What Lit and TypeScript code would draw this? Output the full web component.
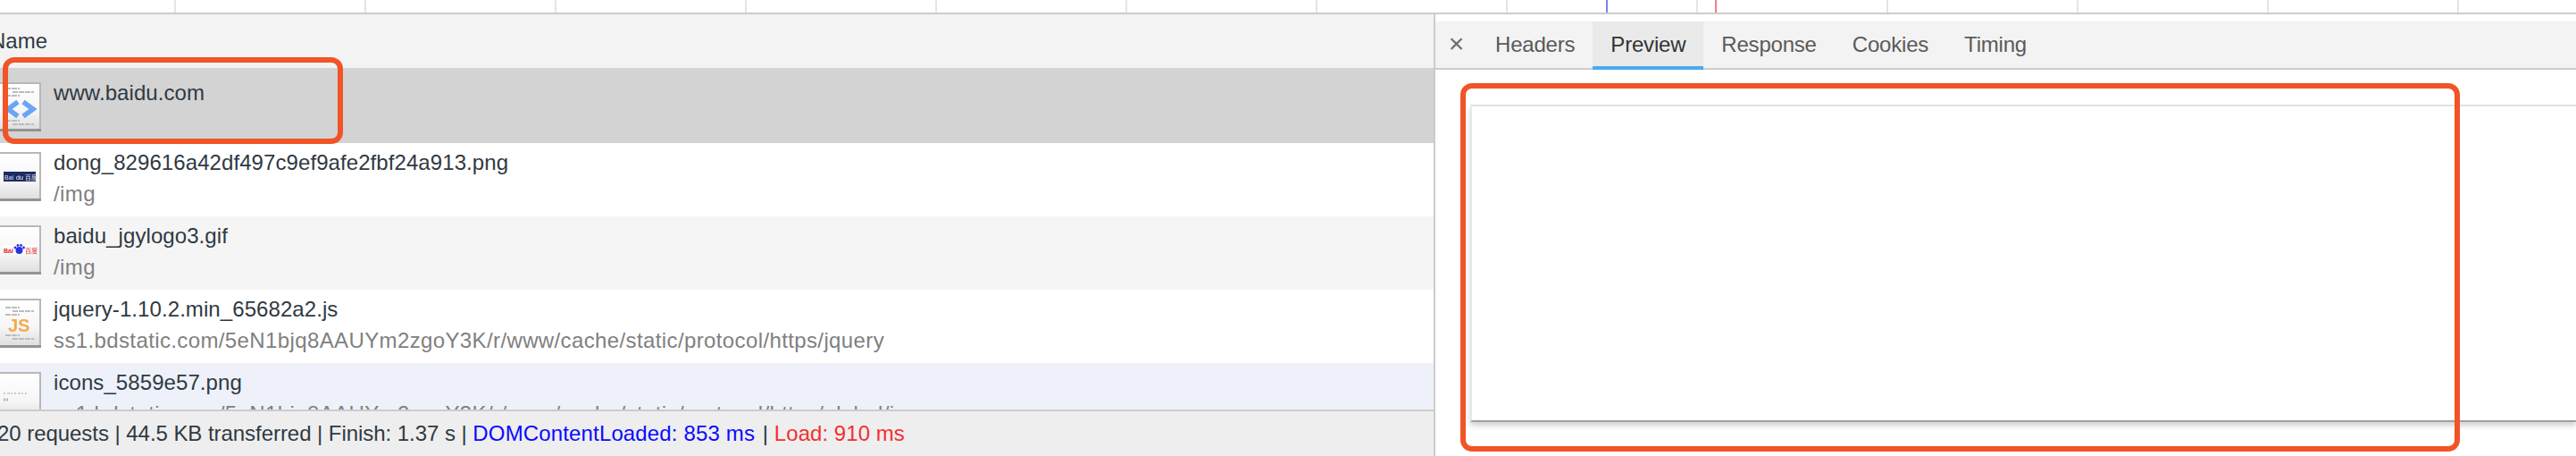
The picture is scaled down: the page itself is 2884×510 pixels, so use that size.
import { LitElement, css, html, svg } from 'lit'
import { customElement } from 'lit/decorators.js'

type RowKind = 'html' | 'dong' | 'logo' | 'js' | 'sprite'

interface RequestRow {
  name: string
  path: string
  kind: RowKind
  tone: string
}

const ROWS: RequestRow[] = [
  { name: 'www.baidu.com', path: '', kind: 'html', tone: 'selected' },
  { name: 'dong_829616a42df497c9ef9afe2fbf24a913.png', path: '/img', kind: 'dong', tone: 'white' },
  { name: 'baidu_jgylogo3.gif', path: '/img', kind: 'logo', tone: 'grey' },
  { name: 'jquery-1.10.2.min_65682a2.js', path: 'ss1.bdstatic.com/5eN1bjq8AAUYm2zgoY3K/r/www/cache/static/protocol/https/jquery', kind: 'js', tone: 'white' },
  { name: 'icons_5859e57.png', path: 'ss1.bdstatic.com/5eN1bjq8AAUYm2zgoY3K/r/www/cache/static/protocol/https/global/img', kind: 'sprite', tone: 'hover' },
]

const TABS = ['Headers', 'Preview', 'Response', 'Cookies', 'Timing']

// greyed "source code" lines on the document thumbnails
const textLines = (ys: number[]) =>
  ys.map((y, i) => svg`<path d="M${i % 2 ? 16 : 8} ${y}h${i % 2 ? 24 : 16}" stroke="#bdbdbd" stroke-width="2" stroke-dasharray="6 1"/>`)

function iconBody(kind: RowKind) {
  if (kind === 'html') {
    return svg`${textLines([7, 11, 15])}
      <path d="M22 22l-11 8 11 8M28 22l11 8-11 8" fill="none" stroke="#6aa4f5" stroke-width="5.500"/>
      ${textLines([43, 47])}`
  }
  if (kind === 'dong') {
    return svg`<rect x="6" y="22" width="36" height="11" fill="#1f2a62"/>
      <text x="7" y="31" class="mini" fill="#dfe3f2">Bai</text>
      <text x="20" y="31" class="mini" fill="#fff">du</text>
      <text x="30" y="31" class="mini" fill="#dfe3f2">百度</text>`
  }
  if (kind === 'logo') {
    return svg`<rect x="6" y="22" width="36" height="10" fill="#fff"/>
      <text x="6" y="31" class="mini bold" fill="#dd2222">Bai</text>
      <text x="30" y="31" class="mini" fill="#dd2222">百度</text>
      <circle cx="23.500" cy="28" r="4" fill="#2932e1"/>
      <circle cx="19" cy="25" r="1.400" fill="#2932e1"/><circle cx="22" cy="22.500" r="1.400" fill="#2932e1"/>
      <circle cx="25.500" cy="22.500" r="1.400" fill="#2932e1"/><circle cx="28.500" cy="25" r="1.400" fill="#2932e1"/>`
  }
  if (kind === 'js') {
    return svg`${textLines([10, 14, 18])}
      <text x="11" y="37" class="js" fill="#f5a94a">JS</text>
      ${textLines([41, 45])}`
  }
  return svg`<path d="M6 24h28" stroke="#d79ca4" stroke-width="1" stroke-dasharray="2 2"/>
    <path d="M6 24h28" stroke="#8fb0dc" stroke-width="1" stroke-dasharray="1 5"/>
    <path d="M6 31h6" stroke="#b5b5b5" stroke-width="3" stroke-dasharray="2 1"/>`
}

@customElement('file-icon')
export class FileIcon extends LitElement {
  static properties = { kind: { type: String } }
  kind: RowKind = 'html'

  render() {
    return html`<svg width="48" height="56" viewBox="0 0 48 56">
      <defs>
        <linearGradient id="sheet" x1="0" y1="0" x2="0" y2="1">
          <stop offset="0" stop-color="#fff" />
          <stop offset="0.6" stop-color="#f6f6f6" />
          <stop offset="1" stop-color="#dedede" />
        </linearGradient>
      </defs>
      <rect x="1" y="1" width="46" height="52" fill="url(#sheet)" stroke="#b8b8b8" stroke-width="2" />
      <rect x="0" y="52" width="48" height="3" fill="#949494" />
      ${iconBody(this.kind)}
    </svg>`
  }

  static styles = css`
    :host {
      display: block;
      width: 48px;
      height: 56px;
    }
    svg {
      display: block;
      filter: blur(0.5px);
    }
    .mini {
      font-family: 'Liberation Sans', 'Noto Sans CJK SC', sans-serif;
      font-size: 7px;
    }
    .bold {
      font-weight: bold;
    }
    .js {
      font-family: 'Liberation Sans', sans-serif;
      font-size: 20px;
      font-weight: bold;
    }
  `
}

@customElement('app-root')
export class AppRoot extends LitElement {
  render() {
    return html`
      <div class="timeline">
        ${Array.from({ length: 14 }, () => html`<div class="tick"></div>`)}
        <div class="marker dom"></div>
        <div class="marker load"></div>
      </div>
      <div class="main">
        <section class="list">
          <div class="name-head"><span>Name</span></div>
          <div class="rows">
            ${ROWS.map(
              (r) => html`
                <div class="row ${r.tone}">
                  <file-icon .kind=${r.kind}></file-icon>
                  <div class="labels">
                    <div class="name">${r.name}</div>
                    <div class="path">${r.path}</div>
                  </div>
                </div>
              `
            )}
          </div>
          <div class="summary">
            <span class="counts">20 requests | 44.5 KB transferred | Finish: 1.37 s | </span><span class="blue">DOMContentLoaded: 853 ms</span><span class="sep"> | </span><span class="red">Load: 910 ms</span>
          </div>
        </section>
        <section class="detail">
          <div class="tabs">
            <div class="close">×</div>
            ${TABS.map((t) => html`<div class="tab ${t === 'Preview' ? 'active' : ''}">${t}</div>`)}
          </div>
          <div class="preview-area"><div class="page"></div></div>
        </section>
      </div>
      <div class="callout left"></div>
      <div class="callout right"></div>
    `
  }

  static styles = css`
    :host {
      display: block;
      position: relative;
      width: 2884px;
      height: 510px;
      overflow: hidden;
      background: #fff;
      font-family: 'Liberation Sans', Arial, sans-serif;
      font-size: 24px;
      color: #303942;
    }
    .timeline {
      display: flex;
      position: relative;
      height: 14px;
      border-bottom: 2px solid #ccc;
    }
    .tick {
      flex: 0 0 213px;
      box-sizing: border-box;
      border-right: 2px solid #e5e5e5;
    }
    .tick:first-child {
      flex-basis: 197px;
    }
    .marker {
      position: absolute;
      top: 0;
      width: 2px;
      height: 14px;
    }
    .dom {
      left: 1798px;
      background: #7b83f0;
    }
    .load {
      left: 1920px;
      background: #f08080;
    }
    .main {
      display: flex;
      height: 494px;
    }
    .list {
      display: flex;
      flex-direction: column;
      flex: 0 0 1605px;
      min-width: 0;
      border-right: 2px solid #ccc;
    }
    .name-head {
      flex: 0 0 60px;
      display: flex;
      align-items: center;
      background: #f3f3f3;
    }
    .name-head span {
      margin-left: -11px;
    }
    .rows {
      flex: 1;
      min-height: 0;
      overflow: hidden;
    }
    .row {
      display: flex;
      box-sizing: border-box;
      height: 82px;
      padding-top: 10px;
    }
    .row.selected {
      height: 84px;
      padding-top: 16px;
      background: #d3d3d3;
    }
    .row.white {
      background: #fff;
    }
    .row.grey {
      background: #f5f5f5;
    }
    .row.hover {
      background: #eef1f9;
    }
    file-icon {
      margin-left: -2px;
      flex: none;
    }
    .labels {
      margin-left: 14px;
      margin-top: -5px;
      line-height: 34px;
      white-space: nowrap;
    }
    .name {
      color: #303942;
      letter-spacing: 0.08px;
    }
    .path {
      color: #808080;
      line-height: 36px;
      min-height: 36px;
      letter-spacing: 0.38px;
    }
    .summary {
      flex: 0 0 50px;
      display: flex;
      align-items: center;
      white-space: pre;
      border-top: 2px solid #ccc;
      background: #eee;
      letter-spacing: 0.05px;
    }
    .counts {
      margin-left: -3px;
      letter-spacing: -0.05px;
    }
    .blue {
      color: #0a0aff;
      letter-spacing: 0.15px;
    }
    .sep {
      margin-left: 2px;
    }
    .red {
      color: #f23030;
    }
    .detail {
      flex: 1;
      min-width: 0;
      display: flex;
      flex-direction: column;
    }
    .tabs {
      display: flex;
      box-sizing: border-box;
      height: 54px;
      margin-top: 8px;
      background: #f3f3f3;
      border-bottom: 2px solid #ccc;
      color: #5a5a5a;
      letter-spacing: -0.2px;
    }
    .close {
      flex: 0 0 47px;
      text-align: center;
      line-height: 50px;
      font-size: 30px;
      color: #6e6e6e;
    }
    .tab {
      padding: 0 20px;
      line-height: 52px;
      height: 52px;
      box-sizing: border-box;
    }
    .tab.active {
      background: #eaeaea;
      color: #333;
      height: 54px;
      border-bottom: 4px solid #4ca9ef;
    }
    .preview-area {
      flex: 1;
      padding: 39px 0 0 39px;
      min-height: 0;
      overflow: hidden;
    }
    .page {
      box-sizing: border-box;
      height: 355px;
      background: #fff;
      border-top: 2px solid #e2e2e2;
      border-left: 2px solid #e8e8e8;
      border-bottom: 2px solid #a0a0a0;
      box-shadow: 0 4px 6px rgba(0, 0, 0, 0.18);
    }
    .callout {
      position: absolute;
      box-sizing: border-box;
      border: 6px solid #f15427;
      border-radius: 13px;
    }
    .callout.left {
      left: 3px;
      top: 64px;
      width: 381px;
      height: 97px;
    }
    .callout.right {
      left: 1635px;
      top: 93px;
      width: 1119px;
      height: 412px;
    }
  `
}
